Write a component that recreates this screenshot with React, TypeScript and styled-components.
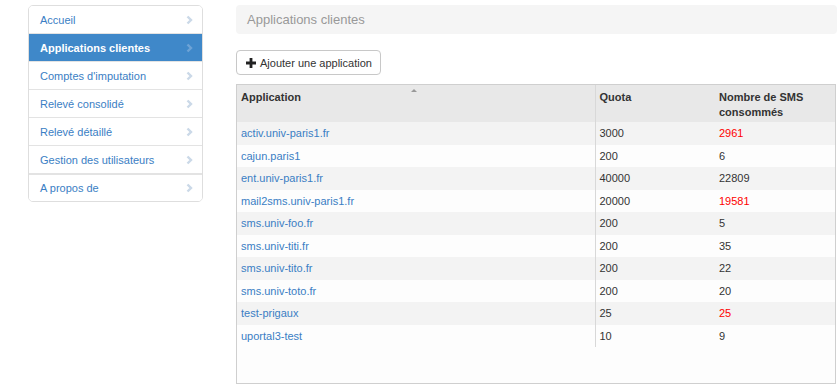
import styled, { createGlobalStyle } from "styled-components";

const GlobalStyle = createGlobalStyle`
  html, body {
    margin: 0;
    padding: 0;
    background: #ffffff;
    font-family: "Liberation Sans", Arial, sans-serif;
    font-size: 11px;
    color: #333;
  }
`;

/* --- Styles --- */
const Page = styled.div`
  display: flex;
  align-items: flex-start;
  padding: 5px 0 0 28px;
  gap: 33px;
  width: 839px;
  height: 388px;
  box-sizing: border-box;
`;
const SideNav = styled.ul`
  list-style: none;
  margin: 0;
  padding: 0;
  width: 175px;
  border: 1px solid #dedede;
  border-radius: 5px;
  box-sizing: border-box;
  overflow: hidden;
  flex-shrink: 0;
`;
const NavItem = styled.li<{ $active?: boolean; $thick?: boolean }>`
  display: flex;
  align-items: center;
  justify-content: space-between;
  height: 28px;
  box-sizing: border-box;
  padding: 0 9px 0 11px;
  border-top: ${(p) => (p.$thick ? "2px" : "1px")} solid #e3e3e3;
  background: ${(p) => (p.$active ? "#3f88c9" : "#fff")};
  color: ${(p) => (p.$active ? "#fff" : "#3a7ec4")};
  font-weight: ${(p) => (p.$active ? 700 : 400)};
  font-size: 11px;
  &:first-child {
    border-top: none;
    height: 27px;
  }
`;
const Chevron = ({ active }: { active?: boolean }) => (
  <svg width="7" height="10" viewBox="0 0 7 10">
    <polyline
      points="1.5,1.5 5,5 1.5,8.5"
      fill="none"
      stroke={active ? "#6ea3d6" : "#cbd9e8"}
      strokeWidth="2.4"
    />
  </svg>
);
const Main = styled.div`
  display: flex;
  flex-direction: column;
  width: 601px;
`;
const TitleBar = styled.div`
  height: 29px;
  background: #f5f5f5;
  border-radius: 4px;
  display: flex;
  align-items: center;
  padding-left: 11px;
  font-size: 13px;
  color: #999;
`;
const AddButton = styled.button`
  margin-top: 16px;
  align-self: flex-start;
  height: 25px;
  display: flex;
  align-items: center;
  gap: 4px;
  padding: 0 8px 0 9px;
  white-space: nowrap;
  background: #fff;
  border: 1px solid #c8c8c8;
  border-radius: 4px;
  font-family: inherit;
  font-size: 11px;
  color: #333;
`;
const TableBox = styled.div`
  margin-top: 9px;
  width: 600px;
  height: 300px;
  border: 1px solid #cfcfcf;
  background: #fdfdfd;
  box-sizing: border-box;
`;
const Table = styled.table`
  width: 100%;
  border-collapse: collapse;
  table-layout: fixed;
`;
const HeaderRow = styled.tr`
  height: 37px;
`;
const HeadCell = styled.th<{ $sep?: boolean }>`
  position: relative;
  background: #e8e8e8;
  text-align: left;
  vertical-align: top;
  padding: 5px 4px 0 4px;
  font-size: 11px;
  line-height: 15px;
  font-weight: 700;
  color: #333;
  border-right: ${(p) => (p.$sep ? "1px solid #d8d8d8" : "none")};
`;
const SortArrow = styled.span`
  position: absolute;
  top: 4px;
  left: 174px;
  width: 0;
  height: 0;
  border-left: 3px solid transparent;
  border-right: 3px solid transparent;
  border-bottom: 3px solid #999;
`;
const Row = styled.tr<{ $odd?: boolean }>`
  height: 22.5px;
  background: ${(p) => (p.$odd ? "#f3f3f3" : "#fdfdfd")};
`;
const Cell = styled.td<{ $sep?: boolean; $link?: boolean; $alert?: boolean }>`
  padding: 0 4px;
  font-size: 11px;
  color: ${(p) => (p.$link ? "#3a7ec4" : p.$alert ? "#ff0000" : "#333")};
  border-right: ${(p) => (p.$sep ? "1px solid #d8d8d8" : "none")};
`;

const menu = [
  "Accueil",
  "Applications clientes",
  "Comptes d'imputation",
  "Relevé consolidé",
  "Relevé détaillé",
  "Gestion des utilisateurs",
  "A propos de",
];

const apps = [
  { name: "activ.univ-paris1.fr", quota: 3000, used: 2961 },
  { name: "cajun.paris1", quota: 200, used: 6 },
  { name: "ent.univ-paris1.fr", quota: 40000, used: 22809 },
  { name: "mail2sms.univ-paris1.fr", quota: 20000, used: 19581 },
  { name: "sms.univ-foo.fr", quota: 200, used: 5 },
  { name: "sms.univ-titi.fr", quota: 200, used: 35 },
  { name: "sms.univ-tito.fr", quota: 200, used: 22 },
  { name: "sms.univ-toto.fr", quota: 200, used: 20 },
  { name: "test-prigaux", quota: 25, used: 25 },
  { name: "uportal3-test", quota: 10, used: 9 },
];

export default function App() {
  return (
    <>
      <GlobalStyle />
      <Page>
        <SideNav>
          {menu.map((label, i) => (
            <NavItem key={label} $active={i === 1} $thick={i === 6}>
              <span>{label}</span>
              <Chevron active={i === 1} />
            </NavItem>
          ))}
        </SideNav>
        <Main>
          <TitleBar>Applications clientes</TitleBar>
          <AddButton>
            <svg width="10" height="10" viewBox="0 0 10 10">
              <path d="M3.6 0h2.8v3.6H10v2.8H6.4V10H3.6V6.4H0V3.6h3.6z" fill="#222" />
            </svg>
            Ajouter une application
          </AddButton>
          <TableBox>
            <Table>
              <colgroup>
                <col style={{ width: 358 }} />
                <col style={{ width: 120 }} />
                <col />
              </colgroup>
              <thead>
                <HeaderRow>
                  <HeadCell $sep>
                    Application
                    <SortArrow />
                  </HeadCell>
                  <HeadCell>Quota</HeadCell>
                  <HeadCell>
                    Nombre de SMS
                    <br />
                    consommés
                  </HeadCell>
                </HeaderRow>
              </thead>
              <tbody>
                {apps.map((a, i) => (
                  <Row key={a.name} $odd={i % 2 === 0}>
                    <Cell $sep $link>
                      {a.name}
                    </Cell>
                    <Cell>{a.quota}</Cell>
                    <Cell $alert={a.used / a.quota > 0.95}>{a.used}</Cell>
                  </Row>
                ))}
              </tbody>
            </Table>
          </TableBox>
        </Main>
      </Page>
    </>
  );
}
